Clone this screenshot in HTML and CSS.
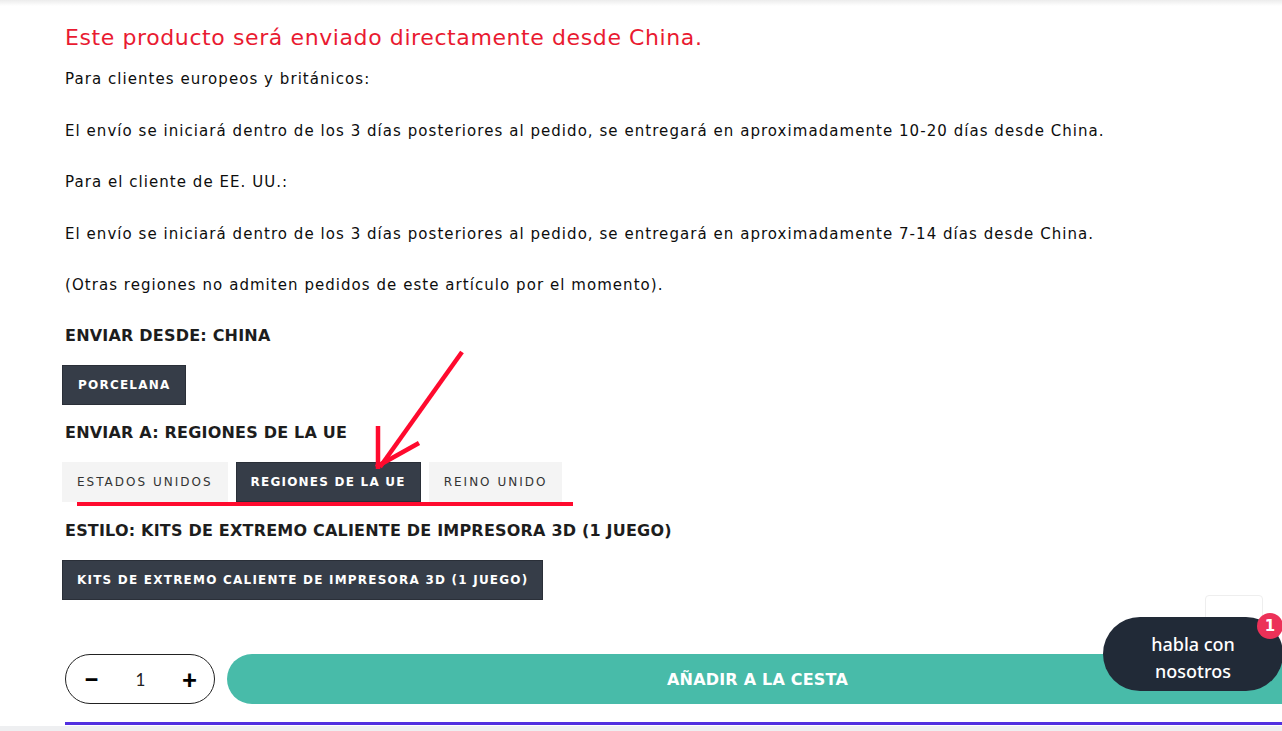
FILE: index.html
```html
<!DOCTYPE html>
<html lang="es">
<head>
  <meta charset="UTF-8">
  <meta name="viewport" content="width=device-width, initial-scale=1.0">
  <title>Producto</title>
  <link rel="stylesheet" href="styles.css">
</head>
<body>
  <div class="top-shadow"></div>

  <main class="product">
    <div class="description">
      <h2 class="notice">Este producto será enviado directamente desde China.</h2>
      <p>Para clientes europeos y británicos:</p>
      <p>El envío se iniciará dentro de los 3 días posteriores al pedido, se entregará en aproximadamente 10-20 días desde China.</p>
      <p>Para el cliente de EE. UU.:</p>
      <p>El envío se iniciará dentro de los 3 días posteriores al pedido, se entregará en aproximadamente 7-14 días desde China.</p>
      <p>(Otras regiones no admiten pedidos de este artículo por el momento).</p>
    </div>

    <div class="option">
      <div class="option-label">Enviar desde: China</div>
      <div class="swatches">
        <button class="swatch active swatch-origin">Porcelana</button>
      </div>
    </div>

    <div class="option option-ship">
      <div class="option-label">Enviar a: Regiones de la UE</div>
      <div class="swatches">
        <button class="swatch">Estados Unidos</button>
        <button class="swatch active">Regiones de la UE</button>
        <button class="swatch">Reino Unido</button>
      </div>
      <!-- anotación de la captura -->
      <div class="mark-line"></div>
      <svg class="mark-arrow" width="100" height="130" viewBox="0 0 100 130">
        <g stroke="#ff0a2e" stroke-width="4.5" fill="none">
          <line x1="97" y1="4" x2="15" y2="119"></line>
          <line x1="13" y1="78" x2="13" y2="121"></line>
          <line x1="11" y1="119" x2="54" y2="95"></line>
        </g>
      </svg>
    </div>

    <div class="option">
      <div class="option-label">Estilo: Kits de extremo caliente de impresora 3D (1 juego)</div>
      <div class="swatches">
        <button class="swatch active">Kits de extremo caliente de impresora 3D (1 juego)</button>
      </div>
    </div>

    <div class="buy-row">
      <div class="qty">
        <span class="qty-btn">&minus;</span>
        <span class="qty-value">1</span>
        <span class="qty-btn">+</span>
      </div>
      <button class="add-cart">Añadir a la cesta</button>
    </div>

    <div class="divider"></div>
  </main>

  <div class="bottom-strip"></div>

  <div class="scroll-top"></div>
  <div class="chat">
    habla con<br>nosotros
    <span class="chat-badge">1</span>
  </div>
</body>
</html>
```

FILE: styles.css
```css
/* Base */
html, body {
  margin: 0;
  padding: 0;
  overflow: hidden;
}

body {
  font-family: "DejaVu Sans", Verdana, sans-serif;
  color: #0d0d0d;
  background: #fff;
  height: 731px;
  position: relative;
}

.top-shadow {
  height: 6px;
  background: linear-gradient(#ececec, #fff);
}

.product {
  padding: 0 0 0 65px;
}

/* Descripción */
.notice {
  margin: 17px 0 14px;
  font-size: 22px;
  font-weight: normal;
  letter-spacing: 0.6px;
  color: #e91a31;
  line-height: 30px;
}

.description p {
  margin: 0 0 27.5px;
  font-size: 15px;
  letter-spacing: 1.05px;
  line-height: 24px;
}

.description p:last-child {
  margin-bottom: 27px;
}

/* Opciones */
.option {
  position: relative;
  margin-bottom: 16px;
}

.option-ship {
  margin-bottom: 17px;
}

.option-label {
  font-size: 16px;
  font-weight: 700;
  letter-spacing: 0.2px;
  text-transform: uppercase;
  color: #1d1d1d;
  line-height: 24px;
  margin-bottom: 17px;
}

.swatches {
  display: flex;
  gap: 8px;
  margin-left: -3px;
}

.swatch {
  font-family: inherit;
  font-size: 12px;
  font-weight: normal;
  letter-spacing: 2px;
  text-transform: uppercase;
  color: #333;
  background: #f4f4f4;
  border: 1px solid #f4f4f4;
  height: 40px;
  padding: 0 14px;
  cursor: pointer;
}

.swatch.active {
  background: #363d48;
  border-color: #2a2f38;
  color: #fff;
  font-weight: 700;
  letter-spacing: 1.22px;
}

.swatch-origin {
  padding: 0 15px;
}

/* Anotaciones */
.mark-line {
  position: absolute;
  left: 12px;
  top: 81px;
  width: 496px;
  height: 4px;
  background: #ff0a2e;
}

.mark-arrow {
  position: absolute;
  left: 300px;
  top: -73px;
}

/* Compra */
.buy-row {
  display: flex;
  align-items: center;
  gap: 12px;
  margin-top: 54px;
}

.qty {
  flex: none;
  width: 150px;
  height: 50px;
  border: 1px solid #222;
  border-radius: 25px;
  display: flex;
  align-items: center;
  justify-content: space-between;
  padding: 0 17px 0 18px;
  box-sizing: border-box;
  font-family: "Lato", sans-serif;
}

.qty-btn {
  font-size: 26px;
  font-weight: 900;
  color: #000;
  line-height: 1;
}

.qty-value {
  font-size: 17px;
  color: #222;
}

.add-cart {
  flex: 1;
  height: 50px;
  margin-right: -40px;
  border: none;
  border-radius: 25px;
  background: #48bba9;
  color: #fff;
  font-family: inherit;
  font-size: 16px;
  font-weight: 700;
  letter-spacing: 0.2px;
  text-transform: uppercase;
  padding-right: 40px;
}

.divider {
  margin-top: 18px;
  height: 3px;
  background: #5230e0;
}

.bottom-strip {
  position: absolute;
  left: 0;
  right: 0;
  bottom: 0;
  height: 5px;
  background: #eeeff1;
}

/* Widget de chat */
.scroll-top {
  position: absolute;
  left: 1205px;
  top: 595px;
  width: 56px;
  height: 46px;
  background: #fff;
  border: 1px solid #eee;
  border-radius: 4px;
}

.chat {
  position: absolute;
  left: 1103px;
  top: 617px;
  width: 180px;
  height: 74px;
  box-sizing: border-box;
  border-radius: 37px;
  background: #212a37;
  color: #fff;
  font-family: "Noto Sans", sans-serif;
  font-size: 18px;
  font-weight: 500;
  line-height: 27px;
  text-align: center;
  padding: 14px 0 0 0;
}

.chat-badge {
  position: absolute;
  right: 0;
  top: -4px;
  width: 26px;
  height: 26px;
  border-radius: 50%;
  background: #ec3158;
  color: #fff;
  font-family: "DejaVu Sans", sans-serif;
  font-size: 15px;
  font-weight: 700;
  line-height: 26px;
  text-align: center;
}
```
